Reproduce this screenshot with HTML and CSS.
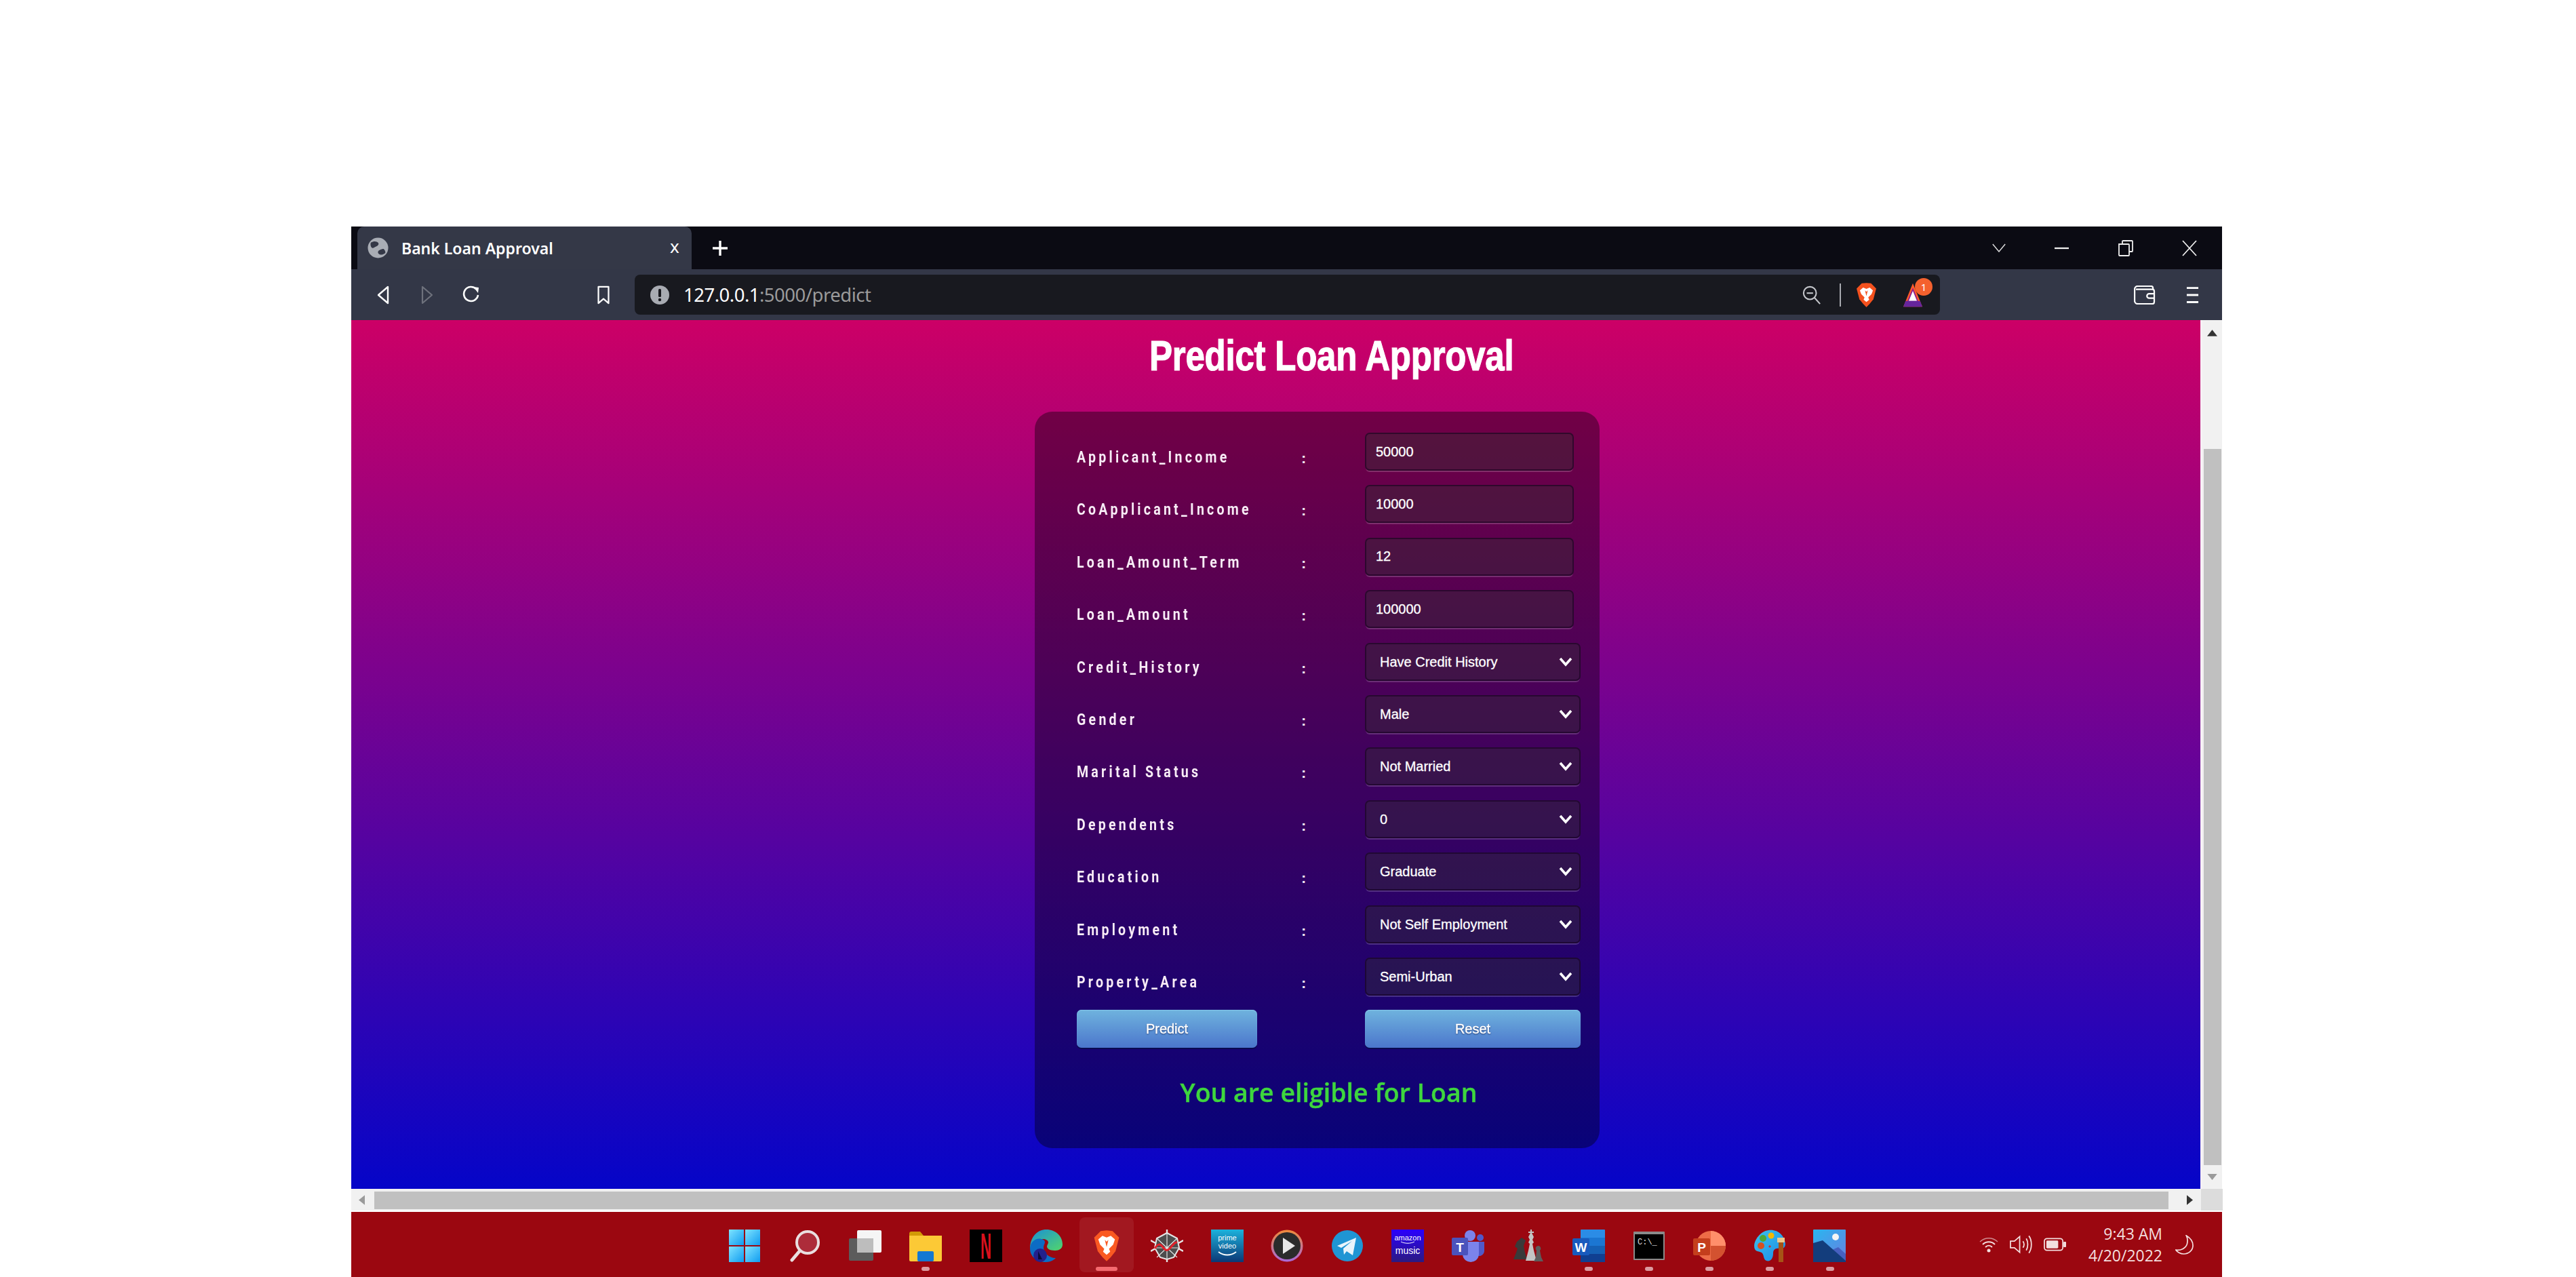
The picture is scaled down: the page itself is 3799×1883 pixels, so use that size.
FILE: index.html
```html
<!DOCTYPE html>
<html lang="en">
<head>
<meta charset="utf-8">
<title>Bank Loan Approval</title>
<link rel="stylesheet" href="styles.css">
</head>
<body>
<div class="window">
  <div class="tabbar">
    <div class="tab">
      <svg class="favicon" viewBox="0 0 32 32"><circle cx="16" cy="16" r="15.5" fill="#a9adb5"/><path d="M5 8c5-3 9-2 11 0s0 5-3 6-4 3-6 2-3-5-2-8zM27 24c-4 3-8 3-10 1s-1-5 2-6 5-2 6-1 3 4 2 6z" fill="#343847"/></svg>
      <span class="tab-title">Bank Loan Approval</span>
      <span class="tab-close">x</span>
    </div>
    <svg class="newtab" viewBox="0 0 24 24"><path d="M12 1v22M1 12h22" stroke="#fff" stroke-width="3.4"/></svg>
    <div class="winctl">
      <svg viewBox="0 0 24 14" class="wc-chev"><path d="M2 1l10 12L22 1" fill="none" stroke="#ddd" stroke-width="1.6"/></svg>
      <svg viewBox="0 0 22 4" class="wc-min"><path d="M0 2h22" stroke="#eee" stroke-width="2.4"/></svg>
      <svg viewBox="0 0 22 24" class="wc-rest"><path d="M1 6h14a1 1 0 0 1 1 1v15a1 1 0 0 1-1 1H2a1 1 0 0 1-1-1zM6 6V2a1 1 0 0 1 1-1h13a1 1 0 0 1 1 1v14a1 1 0 0 1-1 1h-4" fill="none" stroke="#eee" stroke-width="1.8"/></svg>
      <svg viewBox="0 0 22 24" class="wc-close"><path d="M1 1l20 22M21 1L1 23" stroke="#eee" stroke-width="1.8"/></svg>
    </div>
  </div>

  <div class="toolbar">
    <span class="tool"><svg viewBox="0 0 20 28" class="nav-ic"><path d="M17 2v24L3 14z" fill="none" stroke="#fff" stroke-width="2.4" stroke-linejoin="round"/></svg></span>
    <span class="tool"><svg viewBox="0 0 20 28" class="nav-ic"><path d="M3 2v24l14-12z" fill="none" stroke="#6e717c" stroke-width="2.2" stroke-linejoin="round"/></svg></span>
    <span class="tool"><svg viewBox="0 0 26 28" class="nav-ic wide"><path d="M20 5a10.5 10.5 0 1 0 3 9" fill="none" stroke="#fff" stroke-width="2.6"/><path d="M16 2l8 1-1 8z" fill="#fff"/></svg></span>
    <span class="tool bookmark"><svg viewBox="0 0 20 30" class="nav-ic"><path d="M2 2h16v26l-8-7-8 7z" fill="none" stroke="#fff" stroke-width="2.4" stroke-linejoin="round"/></svg></span>
    <div class="address">
      <svg class="info" viewBox="0 0 28 28"><circle cx="14" cy="14" r="14" fill="#a8abb2"/><rect x="12" y="5" width="4" height="12" rx="1.5" fill="#18191f"/><circle cx="14" cy="21" r="2.2" fill="#18191f"/></svg>
      <span class="url"><b>127.0.0.1</b>:5000/predict</span>
      <span class="addr-right">
        <svg class="zoomout" viewBox="0 0 30 30"><circle cx="12" cy="12" r="10" fill="none" stroke="#c5c7cc" stroke-width="2.2"/><path d="M7 12h10" stroke="#c5c7cc" stroke-width="2.2"/><path d="M19 19l9 10" stroke="#c5c7cc" stroke-width="2.2"/></svg>
        <i class="sep"></i>
        <svg class="shield" viewBox="0 0 48 54"><path d="M24 1l10 1 6 6 5 5-6 23-8 10-7 7-7-7-8-10L3 13l5-5 6-6z" fill="#f4511e"/><path d="M24 14l7-3 7 6-3 8-7 7 2 5-6 5-6-5 2-5-7-7-3-8 7-6z" fill="#fff"/><path d="M21 17l3 12 3-12-3 3z" fill="#f4511e"/></svg>
        <span class="bat">
          <svg class="bat-tri" viewBox="0 0 44 54"><path d="M22 1l21 52H1z" fill="#ff5a2b"/><path d="M5 53l17-42 17 42z" fill="#8b1f8f"/><path d="M13 40l9-22 9 22z" fill="#fff"/><path d="M1 53l5-13h32l5 13z" fill="#66259c"/></svg>
          <span class="badge">1</span>
        </span>
      </span>
    </div>
    <svg class="wallet" viewBox="0 0 34 30"><path d="M30 6V4a3 3 0 0 0-3-3H6a5 5 0 0 0-5 5v18a5 5 0 0 0 5 5h23a3 3 0 0 0 3-3V9a3 3 0 0 0-3-3H3" fill="none" stroke="#fff" stroke-width="2.4"/><path d="M32 13h-8a3 3 0 0 0 0 7h8" fill="none" stroke="#fff" stroke-width="2.4"/></svg>
    <svg class="menu" viewBox="0 0 20 28"><path d="M1 3h18M1 14h18M1 25h18" stroke="#fff" stroke-width="3"/></svg>
  </div>

  <div class="viewport">
    <main class="content">
      <h1 class="page-title"><span class="title-text">Predict Loan Approval</span></h1>
      <form class="panel">
        <div class="row"><label class="lbl">Applicant_Income</label><span class="colon">:</span><input class="field" type="text" value="50000"></div>
        <div class="row"><label class="lbl">CoApplicant_Income</label><span class="colon">:</span><input class="field" type="text" value="10000"></div>
        <div class="row"><label class="lbl">Loan_Amount_Term</label><span class="colon">:</span><input class="field" type="text" value="12"></div>
        <div class="row"><label class="lbl">Loan_Amount</label><span class="colon">:</span><input class="field" type="text" value="100000"></div>
        <div class="row"><label class="lbl">Credit_History</label><span class="colon">:</span><select class="pick"><option>Have Credit History</option></select></div>
        <div class="row"><label class="lbl">Gender</label><span class="colon">:</span><select class="pick"><option>Male</option></select></div>
        <div class="row"><label class="lbl">Marital Status</label><span class="colon">:</span><select class="pick"><option>Not Married</option></select></div>
        <div class="row"><label class="lbl">Dependents</label><span class="colon">:</span><select class="pick"><option>0</option></select></div>
        <div class="row"><label class="lbl">Education</label><span class="colon">:</span><select class="pick"><option>Graduate</option></select></div>
        <div class="row"><label class="lbl">Employment</label><span class="colon">:</span><select class="pick"><option>Not Self Employment</option></select></div>
        <div class="row"><label class="lbl">Property_Area</label><span class="colon">:</span><select class="pick"><option>Semi-Urban</option></select></div>
        <div class="row btn-row"><button type="button" class="btn btn-predict">Predict</button><button type="button" class="btn">Reset</button></div>
        <p class="result">You are eligible for Loan</p>
      </form>
    </main>
    <div class="vbar">
      <svg class="arrow-up" viewBox="0 0 16 10"><path d="M8 0l8 10H0z" fill="#333"/></svg>
      <div class="vthumb"></div>
      <svg class="arrow-down" viewBox="0 0 16 10"><path d="M0 0h16L8 10z" fill="#9a9a9a"/></svg>
    </div>
  </div>

  <div class="hbar">
    <svg class="arrow-left" viewBox="0 0 10 16"><path d="M10 0v16L0 8z" fill="#9a9a9a"/></svg>
    <div class="hthumb"></div>
    <svg class="arrow-right" viewBox="0 0 10 16"><path d="M0 0v16l10-8z" fill="#333"/></svg>
    <div class="corner"></div>
  </div>

  <footer class="taskbar">
    <div class="apps">
      <div class="app"><svg viewBox="0 0 48 48"><defs><linearGradient id="w" x1="0" y1="0" x2="1" y2="1"><stop offset="0" stop-color="#7fe3ff"/><stop offset="1" stop-color="#0f9cf0"/></linearGradient></defs><rect x="1" y="0" width="22" height="23" fill="url(#w)"/><rect x="25" y="0" width="22" height="23" fill="url(#w)"/><rect x="1" y="25" width="22" height="23" fill="url(#w)"/><rect x="25" y="25" width="22" height="23" fill="url(#w)"/></svg></div>
      <div class="app"><svg viewBox="0 0 48 48"><circle cx="28" cy="19" r="16" fill="#ad2c3a" stroke="#eadfe0" stroke-width="4"/><path d="M16 32L5 45" stroke="#eadfe0" stroke-width="5" stroke-linecap="round"/></svg></div>
      <div class="app"><svg viewBox="0 0 48 48"><rect x="12" y="1" width="36" height="33" rx="2" fill="#f5f5f5"/><rect x="0" y="13" width="36" height="33" rx="2" fill="#5c5c5c"/><rect x="12" y="13" width="24" height="21" fill="#bdbdbd"/></svg></div>
      <div class="app"><i class="dot"></i><svg viewBox="0 0 48 48"><path d="M0 6a3 3 0 0 1 3-3h13l5 6H0z" fill="#d39a06"/><path d="M0 9h48v36a2 2 0 0 1-2 2H2a2 2 0 0 1-2-2z" fill="#fcc936"/><rect x="12" y="32" width="24" height="15" rx="2" fill="#1478d2"/></svg></div>
      <div class="app"><svg class="open" viewBox="0 0 48 48"><rect width="48" height="48" fill="#000"/><text class="nf" transform="translate(24 43) scale(.42 1)" text-anchor="middle">N</text></svg></div>
      <div class="app"><svg viewBox="0 0 48 48"><defs><linearGradient id="e" x1="0" y1="0" x2="1" y2="1"><stop offset="0" stop-color="#1a8fd8"/><stop offset="1" stop-color="#52d66a"/></linearGradient></defs><path d="M24 0c14 0 24 10 24 22 0 6-5 9-11 9-8 0-12-3-12-6 0-2 2-4 2-6 0-3-4-5-8-5C10 14 2 22 0 28 0 12 10 0 24 0z" fill="url(#e)"/><path d="M0 28c0-10 9-16 17-14 5 1 6 4 4 8-4 8 4 20 17 20-4 4-9 6-14 6C10 48 0 40 0 28z" fill="#0c6cc4"/><ellipse cx="15" cy="38" rx="10" ry="10" fill="#23208c"/><path d="M12 32l6 12h-6z" fill="#0a0a3a"/></svg></div>
      <div class="app active"><i class="bar"></i><svg viewBox="0 0 48 54" class="tall"><path d="M24 1l10 1 6 6 5 5-6 23-8 10-7 7-7-7-8-10L3 13l5-5 6-6z" fill="#fa4d12"/><path d="M24 13l7-3 7 6-3 9-7 7 2 5-6 5-6-5 2-5-7-7-3-9 7-6z" fill="#fff"/><path d="M21 17l3 12 3-12-3 3z" fill="#fa4d12"/></svg></div>
      <div class="app"><svg viewBox="0 0 48 48"><path d="M24 0v6M24 42v6M0 16l7 4M41 28l7 4M48 16l-7 4M7 28l-7 4" stroke="#e4e4e4" stroke-width="2.4"/><path d="M24 5l15 8 3 14-8 14-10 3-10-3-8-14 3-14z" fill="#4d4d4d" stroke="#e4e4e4" stroke-width="2"/><path d="M24 5v39M9 13l30 28M39 13L9 41M5 27h37" stroke="#e4e4e4" stroke-width="1.2"/><path d="M6 28c5-8 8-7 12-2s6 6 10 2 7-10 11-9" fill="none" stroke="#e4202a" stroke-width="3"/></svg></div>
      <div class="app"><svg viewBox="0 0 48 48"><defs><linearGradient id="p" x1="0" y1="0" x2="0" y2="1"><stop offset="0" stop-color="#1cb2dc"/><stop offset="1" stop-color="#0c3876"/></linearGradient></defs><rect width="48" height="48" fill="url(#p)"/><text class="tiny" x="24" y="16" text-anchor="middle">prime</text><text class="tiny" x="24" y="28" text-anchor="middle">video</text><path d="M11 33c8 6 18 6 26 0" fill="none" stroke="#fff" stroke-width="2"/></svg></div>
      <div class="app"><svg viewBox="0 0 48 48"><defs><linearGradient id="r" x1="0" y1="0" x2="0" y2="1"><stop offset="0" stop-color="#f08a3a"/><stop offset="1" stop-color="#a868d8"/></linearGradient></defs><circle cx="24" cy="24" r="23.500" fill="url(#r)"/><circle cx="24" cy="24" r="20" fill="#2b2b2b"/><path d="M18 12l18 12-18 12z" fill="#e8e8e8"/></svg></div>
      <div class="app"><svg viewBox="0 0 48 48"><circle cx="24" cy="24" r="23" fill="#1f95d4"/><path d="M9 24l28-12-5 26-9-6-4 5-1-9 13-11-16 10z" fill="#e8f4fb"/></svg></div>
      <div class="app"><svg viewBox="0 0 48 48"><defs><linearGradient id="m" x1="0" y1="0" x2="0" y2="1"><stop offset="0" stop-color="#2a00ff"/><stop offset="1" stop-color="#2c1a80"/></linearGradient></defs><rect width="48" height="48" fill="url(#m)"/><text class="tiny" x="24" y="16" text-anchor="middle">amazon</text><path d="M14 18c6 3 14 3 20 0" fill="none" stroke="#fff" stroke-width="1"/><text class="tiny big" x="24" y="36" text-anchor="middle">music</text></svg></div>
      <div class="app"><svg viewBox="0 0 48 48"><circle cx="27" cy="9" r="8" fill="#7b83eb"/><circle cx="42" cy="12" r="5" fill="#5059c9"/><path d="M36 18h12v14a8 8 0 0 1-12 6z" fill="#5059c9"/><path d="M14 18h26v18a12 12 0 0 1-24 0z" fill="#7b83eb"/><rect x="0" y="12" width="24" height="26" rx="2" fill="#4b53bc"/><text class="msT" x="12" y="33" text-anchor="middle">T</text></svg></div>
      <div class="app"><svg viewBox="0 0 48 48"><path d="M7 18l7-6 6 4-3 8 2 10 3 10H2l4-10 2-6-4-3z" fill="#3a3a3a"/><path d="M27 0h2v3h3v2h-3l3 6-2 4 2 4-2 2 2 10 4 15H20l4-15 2-10-2-2 2-4-2-4 3-6h-3V3h3z" fill="#c4c4c4"/><path d="M38 24a4 4 0 0 1 3 7l2 10 3 6H32l3-6 1-10a4 4 0 0 1 2-7z" fill="#5c5c5c"/></svg></div>
      <div class="app"><i class="dot"></i><svg viewBox="0 0 48 48"><rect x="12" y="0" width="36" height="48" rx="1" fill="#2b8ce6"/><rect x="12" y="12" width="36" height="12" fill="#1b76d2"/><rect x="12" y="24" width="36" height="12" fill="#1560b4"/><rect x="12" y="36" width="36" height="12" fill="#103f91"/><rect x="0" y="13" width="25" height="25" rx="2" fill="#185abd"/><text class="msT" x="12.500" y="33" text-anchor="middle">W</text></svg></div>
      <div class="app"><i class="dot"></i><svg viewBox="0 0 48 48"><rect x="1" y="3" width="46" height="42" rx="1" fill="#8a8a8a"/><rect x="3" y="7" width="42" height="36" fill="#000"/><text class="cmd" x="7" y="22">C:\_</text></svg></div>
      <div class="app"><i class="dot"></i><svg viewBox="0 0 48 48"><circle cx="26" cy="24" r="22" fill="#ed6c47"/><path d="M26 2a22 22 0 0 1 22 22H26z" fill="#ff8f6b"/><path d="M26 46a22 22 0 0 0 22-22H26z" fill="#d35230"/><rect x="0" y="13" width="25" height="25" rx="2" fill="#c43e1c"/><text class="msT" x="12.500" y="33" text-anchor="middle">P</text></svg></div>
      <div class="app"><i class="dot"></i><svg viewBox="0 0 48 48"><defs><linearGradient id="a" x1="0" y1="0" x2="1" y2="1"><stop offset="0" stop-color="#3cc0ea"/><stop offset="1" stop-color="#1a8ce8"/></linearGradient></defs><path d="M22 1c14-2 24 8 25 20 0 6-4 8-9 7-6-1-9 2-9 7 0 8-4 13-10 11-5-2-3-9-7-12-3-2-8-1-10-5C-2 20 8 3 22 1z" fill="url(#a)"/><circle cx="11" cy="24" r="5" fill="#d94f1e"/><circle cx="14" cy="13" r="5" fill="#4da838"/><circle cx="26" cy="9" r="4.500" fill="#f5b800"/><rect x="37" y="14" width="7" height="34" fill="#a65316"/><rect x="35" y="12" width="11" height="7" fill="#edc88c"/><path d="M24 23l2 2-2 2-2-2z" fill="#c9302c"/></svg></div>
      <div class="app"><i class="dot"></i><svg viewBox="0 0 48 48"><defs><linearGradient id="ph" x1="0" y1="0" x2="1" y2="1"><stop offset="0" stop-color="#29b6f0"/><stop offset="1" stop-color="#6a7fe0"/></linearGradient></defs><rect width="48" height="48" rx="1" fill="url(#ph)"/><circle cx="33" cy="11" r="5" fill="#f5f5f5"/><path d="M28 30l9-4 11 10v12H24z" fill="#4660c0"/><path d="M0 20l14-4 34 30v2H0z" fill="#133d7c"/></svg></div>
    </div>
    <div class="tray">
      <svg class="t-wifi" viewBox="0 0 28 24"><path d="M1 8c8-7 18-7 26 0" fill="none" stroke="#cf8b8f" stroke-width="1.500"/><path d="M5 12c5-5 13-5 18 0M9 16c3-3 7-3 10 0" fill="none" stroke="#f3dede" stroke-width="2"/><circle cx="14" cy="21" r="2.500" fill="#f3dede"/></svg>
      <svg class="t-vol" viewBox="0 0 34 28"><path d="M1 9h6l8-7v24l-8-7H1z" fill="none" stroke="#f3dede" stroke-width="1.800"/><path d="M20 9c2 3 2 7 0 10M25 5c3 5 3 13 0 18M29 1c5 7 5 19 0 26" fill="none" stroke="#f3dede" stroke-width="1.800"/></svg>
      <svg class="t-bat" viewBox="0 0 34 20"><rect x="1" y="1" width="28" height="18" rx="4" fill="none" stroke="#f3dede" stroke-width="1.800"/><rect x="4" y="4" width="18" height="12" rx="1.500" fill="#f3dede"/><rect x="30" y="6" width="4" height="8" rx="1" fill="#f3dede"/></svg>
      <div class="clock"><span>9:43 AM</span><span>4/20/2022</span></div>
      <svg class="t-moon" viewBox="0 0 28 30"><path d="M17 1c5 3 10 8 10 15 0 8-7 13-14 13-5 0-10-3-12-6 8 1 15-3 17-9 1-4 1-9-1-13z" fill="none" stroke="#f3dede" stroke-width="1.800"/></svg>
    </div>
  </footer>
</div>
</body>
</html>
```
FILE: styles.css
```css
* { box-sizing: border-box; }
html, body { margin: 0; padding: 0; background: #fff; overflow: hidden; }
body { padding: 334px 0 0 518px; width: 3799px; height: 1883px; font-family: "Liberation Sans", sans-serif; }
.window { width: 2759px; height: 1549px; display: flex; flex-direction: column; filter: blur(.5px); }

/* tab strip */
.tabbar { height: 63px; background: #0b0b13; display: flex; align-items: stretch; padding-left: 9px; flex: none; }
.tab { width: 493px; background: #343847; border-radius: 10px 10px 0 0; display: flex; align-items: center; padding-left: 15px; }
.favicon { width: 31px; height: 31px; flex: none; }
.tab-title { margin-left: 19px; width: 396px; font: 600 23px "Noto Sans", sans-serif; color: #fff; white-space: nowrap; flex: none; }
.tab-close { color: #fff; font: 400 26px "Noto Sans", sans-serif; line-height: 1; margin-top: -6px; }
.newtab { width: 24px; height: 24px; margin: 20px 0 0 30px; }
.winctl { margin-left: auto; display: grid; grid-template-columns: 92px 93px 95px 94px; justify-items: center; align-items: center; width: 374px; transform: translateX(-1px); }
.wc-chev { width: 22px; height: 13px; }
.wc-min { width: 21px; height: 4px; }
.wc-rest { width: 22px; height: 24px; }
.wc-close { width: 22px; height: 24px; }

/* toolbar */
.toolbar { height: 75px; flex: none; background: #333747; display: flex; align-items: center; padding-left: 14px; }
.tool { width: 65px; display: flex; justify-content: center; }
.nav-ic { width: 20px; height: 28px; }
.nav-ic.wide { width: 26px; }
.bookmark { margin-left: 130px; width: 65px; }
.address { margin-left: 14px; width: 1925px; height: 59px; border-radius: 8px; background: #18191f; display: flex; align-items: center; padding-left: 23px; }
.info { width: 28px; height: 28px; flex: none; }
.url { margin-left: 21px; color: #9b9b9b; font: 400 27.500px "Noto Sans", sans-serif; white-space: nowrap; letter-spacing: -0.5px; }
.url b { color: #fff; font-weight: 400; }
.addr-right { margin-left: auto; display: flex; align-items: center; padding-right: 21px; }
.zoomout { width: 28px; height: 30px; }
.sep { width: 2px; height: 34px; background: #a8aab0; margin: 0 21px 0 27px; }
.shield { width: 33px; height: 38px; }
.bat { position: relative; margin-left: 33px; display: block; height: 36px; width: 38px; }
.bat-tri { width: 38px; height: 36px; display: block; }
.badge { position: absolute; left: 22px; top: -7px; width: 26px; height: 26px; border-radius: 50%; background: #f4612e; color: #fff; font: 400 15px/26px "Noto Sans", sans-serif; text-align: center; }
.wallet { width: 32px; height: 28px; margin-left: 286px; }
.menu { width: 19px; height: 28px; margin-left: 45px; }

/* page */
.viewport { height: 1281px; flex: none; display: flex; }
.content { width: 2727px; flex: none; background: linear-gradient(#cc0066, #0505c8); padding-left: 1008px; }
.page-title { width: 875px; margin: 0 0 31px; height: 104px; text-align: center; color: #fff; font: 700 63px/104px "Liberation Sans", sans-serif; }
.title-text { display: inline-block; transform: scaleX(.81); letter-spacing: -.3px; -webkit-text-stroke: 1.2px #fff; }
.panel { width: 833px; height: 1086px; background: rgba(0, 0, 0, .38); border-radius: 26px; padding: 31px 28px 0 62px; margin: 0; }
.row { height: 77.400px; display: grid; grid-template-columns: 331px 94px 1fr; align-items: start; }
.lbl { margin-top: 22px; color: #f8ecf6; font: 700 23px/30px "Roboto", "Liberation Sans", sans-serif; letter-spacing: 5px; white-space: nowrap; transform: scaleX(.85); transform-origin: 0 50%; }
.colon { margin-top: 23px; color: #f4e6f2; font: 700 22px/30px "Liberation Sans", sans-serif; }
.field, .pick { height: 56px; color: #fff; font: 400 20px "Liberation Sans", sans-serif; -webkit-text-stroke: .3px #fff; border: 2px solid rgba(20, 0, 30, .55); border-radius: 7px; background-color: rgba(50, 45, 50, .42); box-shadow: 0 3px 0 -1px rgba(255, 255, 255, .18); outline: none; }
.field { width: 308px; padding: 0 0 0 14px; }
.pick { width: 318px; padding: 0 0 0 20px; appearance: none; -webkit-appearance: none; background-image: url("data:image/svg+xml,%3Csvg xmlns='http://www.w3.org/2000/svg' viewBox='0 0 20 14'%3E%3Cpath d='M2 2l8 9 8-9' fill='none' stroke='white' stroke-width='3.600'/%3E%3C/svg%3E"); background-repeat: no-repeat; background-position: right 10px center; background-size: 20px 14px; }
.btn-row { grid-template-columns: 425px 1fr; }
.btn { height: 56px; width: 318px; border: 0; border-radius: 7px; color: #fff; font: 400 20px "Liberation Sans", sans-serif; -webkit-text-stroke: .4px #fff; text-shadow: 0 1px 2px #0b1d50; background: linear-gradient(#6fb3de, #4b76cc); box-shadow: 0 2px 0 #0a0a50, inset 0 1px 1px #86c6ea; }
.btn-predict { width: 266px; }
.result { margin: 22px 0 0; text-align: center; color: #3ed63e; font: 600 37.500px/44px "Open Sans", sans-serif; -webkit-text-stroke: .4px #3ed63e; }

/* scrollbars */
.vbar { width: 32px; background: #f1f1f1; display: grid; grid-template-rows: 190px 1056px 1fr; justify-items: center; border-left: 3px solid #f7f0f5; }
.arrow-up { width: 15px; height: 10px; margin-top: 14px; }
.vthumb { width: 26px; background: #c0c0c0; }
.arrow-down { width: 15px; height: 9px; align-self: center; }
.hbar { height: 34px; flex: none; display: flex; align-items: flex-start; background: #f1f1f1; border-bottom: 2px solid #fff; }
.arrow-left { width: 9px; height: 15px; margin: 9px 14px 0 11px; flex: none; }
.hthumb { width: 2646px; height: 26px; margin-top: 4px; background: #c0c0c0; flex: none; }
.arrow-right { width: 9px; height: 15px; margin: 9px 0 0 27px; flex: none; }
.corner { width: 32px; height: 32px; margin-left: 12px; background: #dcdcdc; flex: none; }

/* taskbar */
.taskbar { height: 96px; flex: none; background: #9b0710; display: flex; align-items: stretch; padding-right: 42px; }
.apps { display: flex; padding-left: 536px; }
.app { width: 88.900px; position: relative; display: flex; justify-content: center; padding-top: 26px; }
.app svg { width: 48px; height: 48px; display: block; }
.app svg.open { overflow: visible; }
.app svg.tall { width: 42px; height: 48px; }
.app.active::before { content: ""; position: absolute; left: 5px; top: 8px; width: 80px; height: 81px; border-radius: 8px; background: rgba(255, 255, 255, .07); }
.dot { position: absolute; left: 38.500px; top: 81px; width: 12px; height: 6px; border-radius: 3px; background: #dc9a9f; }
.bar { position: absolute; left: 28.500px; top: 81px; width: 32px; height: 6px; border-radius: 3px; background: #f56b70; }
.nf { font: 700 53px "Liberation Sans", sans-serif; fill: #d8101c; }
.tiny { font: 400 11px "Liberation Sans", sans-serif; fill: #fff; }
.tiny.big { font-size: 14px; }
.msT { font: 700 19px "Liberation Sans", sans-serif; fill: #fff; }
.cmd { font: 400 12px "Liberation Mono", monospace; fill: #ddd; }
.tray { margin-left: auto; display: flex; align-items: center; }
.t-wifi { width: 28px; height: 24px; }
.t-vol { width: 33px; height: 28px; margin-left: 17px; }
.t-bat { width: 33px; height: 20px; margin-left: 17px; }
.clock { width: 142px; display: flex; flex-direction: column; align-items: flex-end; color: #f3dede; font: 400 23px/32px "Open Sans", sans-serif; white-space: nowrap; }
.t-moon { width: 27px; height: 29px; margin-left: 19px; }
```
